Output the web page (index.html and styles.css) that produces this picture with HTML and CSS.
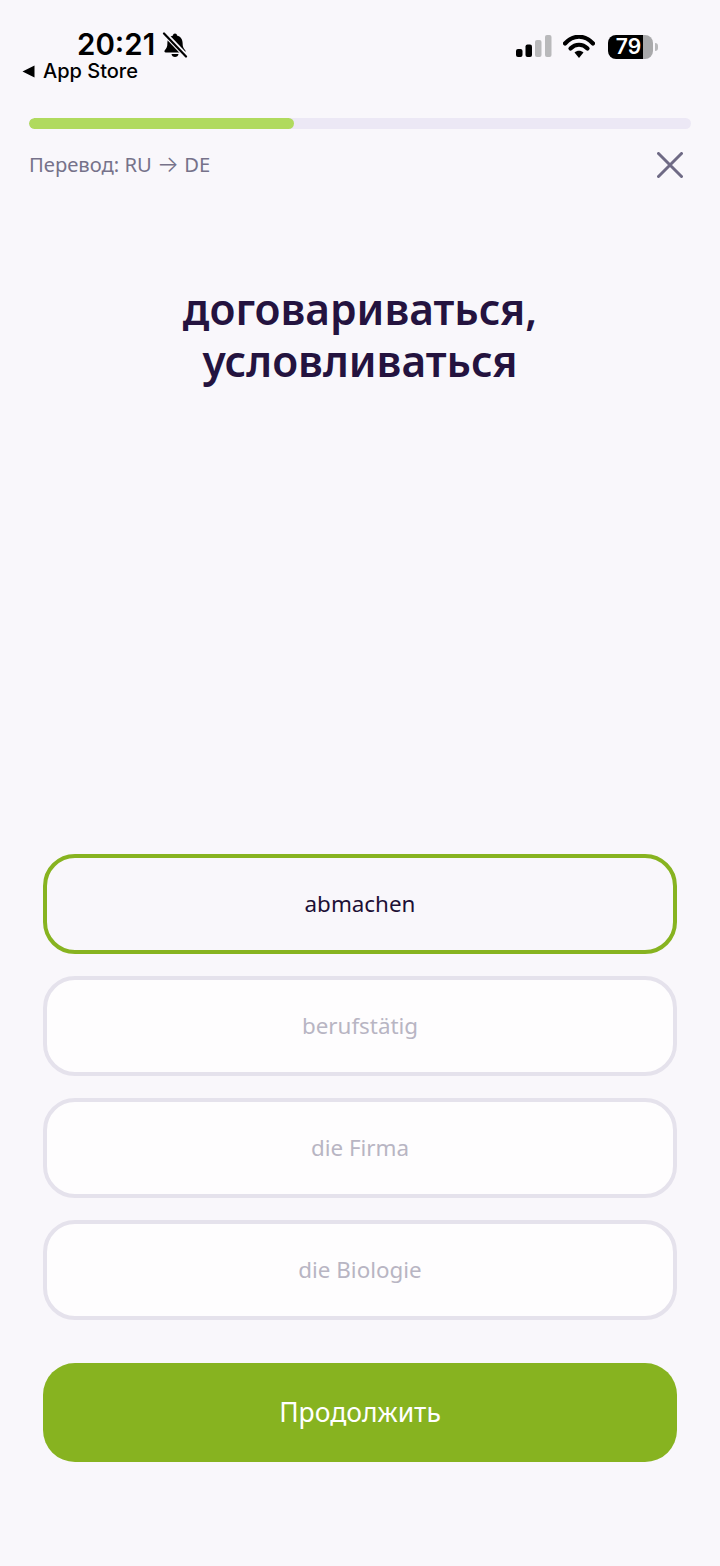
FILE: index.html
```html
<!DOCTYPE html>
<html lang="ru">
<head>
<meta charset="utf-8">
<title>Перевод</title>
<link rel="stylesheet" href="styles.css">
</head>
<body>
<div class="page">
  <header class="status">
    <div class="status-left">
      <div class="time-row">
        <span class="time">20:21</span>
        <svg class="bell" viewBox="0 0 26 26" width="26" height="26">
          <path d="M13 1.5c1.2 0 2 .8 2 1.9 3.6.9 5.6 3.8 5.6 7.6 0 3.6.8 5.4 2.6 7.2.8.9.3 2.3-1 2.3H3.800c-1.300 0-1.800-1.400-1-2.300 1.800-1.800 2.600-3.600 2.600-7.200 0-3.800 2-6.700 5.600-7.600 0-1.100.8-1.900 2-1.900z" fill="#000"/>
          <path d="M9.500 22h7c-.2 1.700-1.700 3-3.500 3s-3.300-1.300-3.500-3z" fill="#000"/>
          <path d="M3 2l21 22" stroke="#f9f7fb" stroke-width="5"/>
          <path d="M2 1.500l22 23" stroke="#000" stroke-width="2.200" stroke-linecap="round"/>
        </svg>
      </div>
      <div class="back-row">
        <svg class="back-tri" viewBox="0 0 13 13" width="13" height="13"><path d="M0.500 6.500L12.500 0.500v12z" fill="#000"/></svg>
        <span>App Store</span>
      </div>
    </div>
    <div class="status-right">
      <svg class="signal" viewBox="0 0 36 24" width="36" height="24">
        <rect x="0" y="14" width="6.500" height="8" rx="2" fill="#000"/>
        <rect x="9.500" y="9.500" width="6.500" height="12.500" rx="2" fill="#000"/>
        <rect x="19" y="5" width="6.500" height="17" rx="2" fill="#b9b9bb"/>
        <rect x="29" y="0" width="6.500" height="22" rx="2" fill="#b9b9bb"/>
      </svg>
      <svg class="wifi" viewBox="0 0 32 24" width="32" height="24">
        <path d="M2 8.500C10-.5 22-.5 30 8.500" fill="none" stroke="#000" stroke-width="4.200" stroke-linecap="round"/>
        <path d="M7.500 13.500c5-5 12-5 17 0" fill="none" stroke="#000" stroke-width="4.200" stroke-linecap="round"/>
        <path d="M11.500 17.500c2.700-2.500 6.300-2.500 9 0L16 23z" fill="#000"/>
      </svg>
      <div class="battery">
        <div class="battery-body"><span>79</span></div>
        <div class="battery-cap"></div>
      </div>
    </div>
  </header>

  <section class="top">
    <div class="track"><div class="fill" style="width:40%"></div></div>
    <div class="meta">
      <span class="mode">Перевод: RU <span class="arrow">→</span> DE</span>
      <svg class="close" viewBox="0 0 26 26" width="26" height="26">
        <path d="M1.500 1.500l23 23M24.500 1.500l-23 23" stroke="#6f6a85" stroke-width="3" stroke-linecap="round"/>
      </svg>
    </div>
  </section>

  <main class="question">
    <h1>договариваться,<br>условливаться</h1>
  </main>

  <section class="answers">
    <div class="option selected">abmachen</div>
    <div class="option">berufstätig</div>
    <div class="option">die Firma</div>
    <div class="option">die Biologie</div>
  </section>

  <div class="action">Продолжить</div>
</div>
</body>
</html>
```

FILE: styles.css
```css
* { box-sizing: border-box; }
html, body { margin: 0; padding: 0; }
body {
  background: #f9f7fb;
  font-family: "Noto Sans", "Open Sans", sans-serif;
}
.page {
  width: 720px;
  height: 1566px;
  display: flex;
  flex-direction: column;
  overflow: hidden;
}
.status {
  height: 118px;
  flex: none;
  display: flex;
  justify-content: space-between;
  padding: 28px 62px 0 22px;
  font-family: "Inter", "Liberation Sans", sans-serif;
  color: #000;
}
.status-left { display: flex; flex-direction: column; }
.time-row {
  display: flex;
  align-items: center;
  gap: 7px;
  padding-left: 55px;
  height: 33px;
}
.time { font-size: 29.500px; font-weight: 600; line-height: 33px; }
.bell { display: block; }
.back-row {
  display: flex;
  align-items: center;
  gap: 8px;
  height: 24px;
  margin-top: -2px;
  font-size: 20px;
  font-weight: 500;
  line-height: 24px;
}
.status-right {
  display: flex;
  align-items: center;
  height: 24px;
  margin-top: 7px;
  gap: 11px;
}
.battery { display: flex; align-items: center; gap: 2px; margin-left: 2px; }
.battery-body {
  width: 45px;
  height: 24px;
  padding-right: 4px;
  border-radius: 8px;
  background: linear-gradient(90deg, #000 0, #000 78%, #a9a9ab 78%, #a9a9ab 100%);
  color: #fff;
  font-size: 21px;
  font-weight: 600;
  line-height: 24px;
  text-align: center;
}
.battery-cap {
  width: 3px;
  height: 8px;
  border-radius: 0 3px 3px 0;
  background: #b9b9bb;
}
.top { flex: none; padding: 0 29px; }
.track {
  height: 11px;
  border-radius: 6px;
  background: #ece8f5;
  overflow: hidden;
}
.fill { height: 100%; border-radius: 6px; background: #b0da5e; }
.meta {
  display: flex;
  justify-content: space-between;
  align-items: center;
  height: 26px;
  margin-top: 23px;
  padding-right: 8px;
}
.mode { font-size: 20.200px; line-height: 24px; margin-top: -2px; color: #76728a; white-space: nowrap; }
.arrow { font-family: "Inter", sans-serif; font-weight: 300; font-size: 23px; line-height: 0; }
.close { display: block; }
.question {
  flex: none;
  height: 676px;
  padding-top: 105px;
  text-align: center;
}
.question h1 {
  margin: 0;
  font-size: 42.500px;
  font-weight: 600;
  line-height: 52px;
  color: #24133f;
}
.answers {
  flex: none;
  display: flex;
  flex-direction: column;
  gap: 22px;
  padding: 0 43px;
}
.option {
  height: 100px;
  padding-bottom: 2px;
  display: flex;
  align-items: center;
  justify-content: center;
  border: 4px solid #e5e2ec;
  border-radius: 32px;
  background: #fefdfe;
  font-size: 22.400px;
  color: #b8b5c3;
}
.option.selected {
  border-color: #87b320;
  background: #f9f7fb;
  color: #1d0f35;
}
.action {
  flex: none;
  height: 99px;
  padding-bottom: 2px;
  margin: 43px 43px 0;
  display: flex;
  align-items: center;
  justify-content: center;
  border-radius: 32px;
  background: #87b320;
  color: #fff;
  font-size: 26.500px;
}
```
